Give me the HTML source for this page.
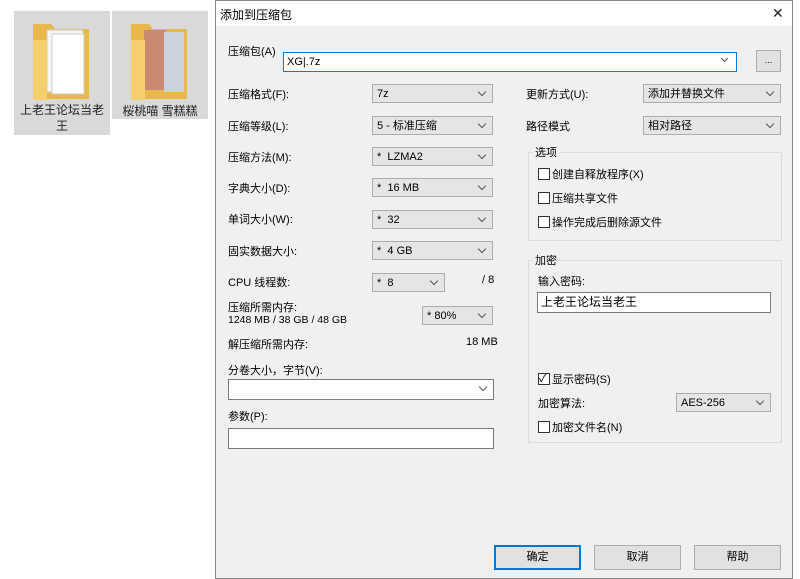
<!DOCTYPE html>
<html><head><meta charset="utf-8"><style>
*{box-sizing:border-box;margin:0;padding:0}
body{width:800px;height:579px;background:#fff;position:relative;overflow:hidden;font-family:"Liberation Sans","Noto Sans CJK SC",sans-serif;font-size:11px;color:#000}
.a{position:absolute;white-space:nowrap}
.dd{position:absolute;background:#e5e5e5;border:1px solid #adadad;height:19px;padding-left:4px;line-height:18px}
.dd::after{content:"";position:absolute;right:7px;top:4px;width:5px;height:5px;border-right:1px solid #555;border-bottom:1px solid #555;transform:rotate(45deg)}
.wd{background:#fff;border-color:#7a7a7a}
.in{position:absolute;background:#fff;border:1px solid #7a7a7a}
.cb{position:absolute;width:12px;height:12px;border:1px solid #333;background:#fff}
.grp{position:absolute;border:1px solid #dcdcdc}
.gt{position:absolute;background:#f0f0f0;padding:0 2px}
.btn{position:absolute;background:#e1e1e1;border:1px solid #adadad;width:87px;height:25px;text-align:center;line-height:23px}
</style></head><body>
<div class="a" style="left:14px;top:11px;width:96px;height:124px;background:#d9d9d9"></div>
<div class="a" style="left:112px;top:11px;width:96px;height:108px;background:#d9d9d9"></div>
<svg class="a" style="left:30px;top:20px" width="64" height="80"><path d="M3 4h18l4 5h34v70H3z" fill="#e8b94a"/><rect x="17" y="10" width="36" height="62" fill="#f4f4f4" stroke="#ccc"/><rect x="22" y="14" width="32" height="60" fill="#fff" stroke="#ccc"/><path d="M3 20 h14 v60 H3z" fill="#f5cf6e"/></svg>
<svg class="a" style="left:128px;top:20px" width="64" height="80"><path d="M3 4h18l4 5h34v70H3z" fill="#e8b94a"/><rect x="16" y="10" width="22" height="60" fill="#c98a70"/><rect x="36" y="12" width="20" height="60" fill="#c9d2dd"/><path d="M3 20 h14 v60 H3z" fill="#f5cf6e"/></svg>
<div class="a" style="left:14px;top:102px;width:96px;text-align:center;font-size:12px;white-space:normal;line-height:16px;color:#222">上老王论坛当老<br>王</div>
<div class="a" style="left:112px;top:102px;width:96px;text-align:center;font-size:12px;color:#222">桜桃喵 雪糕糕</div>
<div class="a" style="left:215px;top:0;width:578px;height:579px;background:#f0f0f0;border:1px solid #888"></div>
<div class="a" style="left:216px;top:1px;width:576px;height:25px;background:#fff"></div>
<div class="a" style="left:220px;top:6px;font-size:12px">添加到压缩包</div>
<div class="a" style="left:772px;top:5px;font-size:14px;font-weight:300;color:#222">✕</div>
<div class="a" style="left:228px;top:43px">压缩包(A)</div>
<div class="in" style="left:283px;top:52px;width:454px;height:20px;border-color:#0078d7;padding-left:3px;line-height:18px">XG|.7z</div>
<div class="a" style="left:722px;top:56px;width:5px;height:5px;border-right:1px solid #555;border-bottom:1px solid #555;transform:rotate(45deg)"></div>
<div class="btn" style="left:756px;top:50px;width:25px;height:22px;line-height:18px;font-size:9px">...</div>
<div class="a" style="left:228px;top:86px">压缩格式(F):</div><div class="dd" style="left:372px;top:84px;width:121px">7z</div>
<div class="a" style="left:228px;top:118px">压缩等级(L):</div><div class="dd" style="left:372px;top:116px;width:121px">5 - 标准压缩</div>
<div class="a" style="left:228px;top:149px">压缩方法(M):</div><div class="dd" style="left:372px;top:147px;width:121px">*&nbsp; LZMA2</div>
<div class="a" style="left:228px;top:180px">字典大小(D):</div><div class="dd" style="left:372px;top:178px;width:121px">*&nbsp; 16 MB</div>
<div class="a" style="left:228px;top:211px">单词大小(W):</div><div class="dd" style="left:372px;top:210px;width:121px">*&nbsp; 32</div>
<div class="a" style="left:228px;top:243px">固实数据大小:</div><div class="dd" style="left:372px;top:241px;width:121px">*&nbsp; 4 GB</div>
<div class="a" style="left:228px;top:274px">CPU 线程数:</div><div class="dd" style="left:372px;top:273px;width:73px">*&nbsp; 8</div>
<div class="a" style="left:482px;top:274px">/ 8</div>
<div class="a" style="left:228px;top:299px">压缩所需内存:</div>
<div class="a" style="left:228px;top:314px;font-size:10.5px">1248 MB / 38 GB / 48 GB</div>
<div class="dd" style="left:422px;top:306px;width:71px">* 80%</div>
<div class="a" style="left:228px;top:336px">解压缩所需内存:</div>
<div class="a" style="left:466px;top:336px">18 MB</div>
<div class="a" style="left:228px;top:362px">分卷大小，字节(V):</div>
<div class="dd wd" style="left:228px;top:379px;width:266px;height:21px"></div>
<div class="a" style="left:228px;top:408px">参数(P):</div>
<div class="in" style="left:228px;top:428px;width:266px;height:21px"></div>
<div class="a" style="left:526px;top:86px">更新方式(U):</div><div class="dd" style="left:643px;top:84px;width:138px">添加并替换文件</div>
<div class="a" style="left:526px;top:118px">路径模式</div><div class="dd" style="left:643px;top:116px;width:138px">相对路径</div>
<div class="grp" style="left:528px;top:152px;width:254px;height:89px"></div>
<div class="gt" style="left:533px;top:144px">选项</div>
<div class="cb" style="left:538px;top:168px"></div><div class="a" style="left:552px;top:166px">创建自释放程序(X)</div>
<div class="cb" style="left:538px;top:192px"></div><div class="a" style="left:552px;top:190px">压缩共享文件</div>
<div class="cb" style="left:538px;top:216px"></div><div class="a" style="left:552px;top:214px">操作完成后删除源文件</div>
<div class="grp" style="left:528px;top:260px;width:254px;height:183px"></div>
<div class="gt" style="left:533px;top:252px">加密</div>
<div class="a" style="left:538px;top:273px">输入密码:</div>
<div class="in" style="left:537px;top:292px;width:234px;height:21px;padding-left:3px;line-height:18px;font-size:12px">上老王论坛当老王</div>
<div class="cb" style="left:538px;top:373px"></div><div class="a" style="left:539px;top:370px;font-size:11px">✓</div><div class="a" style="left:552px;top:371px">显示密码(S)</div>
<div class="a" style="left:538px;top:395px">加密算法:</div><div class="dd" style="left:676px;top:393px;width:95px">AES-256</div>
<div class="cb" style="left:538px;top:421px"></div><div class="a" style="left:552px;top:419px">加密文件名(N)</div>
<div class="btn" style="left:494px;top:545px;border:2px solid #0078d7;line-height:21px">确定</div>
<div class="btn" style="left:594px;top:545px">取消</div>
<div class="btn" style="left:694px;top:545px">帮助</div>
</body></html>
